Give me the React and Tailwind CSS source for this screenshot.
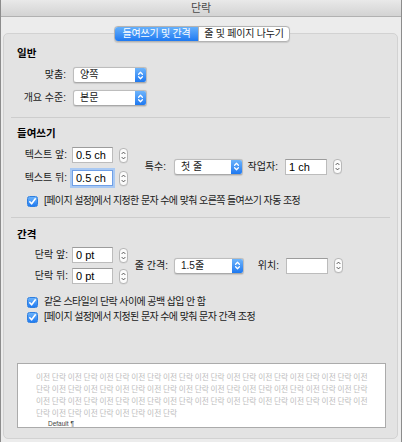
import React from "react";

const Chev = ({ color = "white", sw = 1.3 }) => (
  <svg width="7" height="11" viewBox="0 0 7 11" fill="none" stroke={color} strokeWidth={sw} strokeLinecap="round" strokeLinejoin="round">
    <path d="M1.6 4.2 L3.5 2.3 L5.4 4.2" />
    <path d="M1.6 6.8 L3.5 8.7 L5.4 6.8" />
  </svg>
);

const SmallChev = () => (
  <svg width="5" height="11" viewBox="0 0 5 11" fill="none" stroke="#505050" strokeWidth="1" strokeLinecap="round" strokeLinejoin="round">
    <path d="M1 3.6 L2.5 2.1 L4 3.6" />
    <path d="M1 7.4 L2.5 8.9 L4 7.4" />
  </svg>
);

function Popup({ value, className }) {
  return (
    <div className={"flex h-[16px] rounded-[3px] bg-white border border-[#bdbdbd] border-b-[#a9a9a9] shadow-[0_0.5px_1px_rgba(0,0,0,0.12)] overflow-hidden " + className}>
      <div className="flex-1 pl-[6px] text-[10px] leading-[14px] text-[#1a1a1a]">{value}</div>
      <div className="w-[11px] h-full bg-gradient-to-b from-[#6db4fb] to-[#1c78f0] flex items-center justify-center">
        <Chev />
      </div>
    </div>
  );
}

function Stepper() {
  return (
    <div className="w-[9px] h-[15px] rounded-[4px] border border-[#b8b8b8] bg-[#fbfbfb] flex items-center justify-center shadow-[0_0.5px_0.5px_rgba(0,0,0,0.08)]">
      <SmallChev />
    </div>
  );
}

function Input({ value = "", className = "", focused = false }) {
  return (
    <div
      className={
        "h-[16px] bg-white pl-[3px] text-[11px] leading-[14px] text-black " +
        (focused
          ? "border border-[#6f9fe6] shadow-[0_0_0_2px_#a9c9f3] "
          : "border border-[#bcbcbc] border-t-[#9c9c9c] ") +
        className
      }
    >
      {value}
    </div>
  );
}

function Check({ label }) {
  return (
    <div className="flex items-center h-[14px] pl-[10px]">
      <div className="w-[11px] h-[11px] rounded-[2.5px] bg-gradient-to-b from-[#6ab2fb] to-[#1e7bf1] border border-[#2f7fe0] flex items-center justify-center">
        <svg width="9" height="9" viewBox="0 0 9 9" fill="none" stroke="white" strokeWidth="1.6" strokeLinecap="round" strokeLinejoin="round">
          <path d="M1.8 4.8 L3.6 6.8 L7.3 1.8" />
        </svg>
      </div>
      <div className="ml-[6px] text-[10px] leading-[14px] text-[#1a1a1a] tracking-[-0.6px] whitespace-nowrap">{label}</div>
    </div>
  );
}

function Label({ children, className = "" }) {
  return (
    <div className={"text-right text-[10px] leading-[14px] text-[#1a1a1a] whitespace-nowrap " + className}>{children}</div>
  );
}

function Sep() {
  return <div className="h-px bg-[#cdcdcd] ml-[-6px] mr-[-3px]" />;
}

const l1 = "이전 단락 이전 단락 이전 단락 이전 단락 이전 단락 이전 단락 이전 단락 이전 단락 이전 단락 이전 단락 이전";
const l2 = "단락 이전 단락 이전 단락 이전 단락 이전 단락 이전 단락 이전 단락 이전 단락 이전 단락 이전 단락 이전 단락";
const l4 = "단락 이전 단락 이전 단락 이전 단락 이전 단락";

export default function App() {
  return (
    <div className="w-[402px] h-[442px] bg-[#ececec] border-l border-r border-[#8c8c8c] overflow-hidden font-['Liberation_Sans','Noto_Sans_CJK_KR',sans-serif]">
      {/* title bar */}
      <div className="h-[17px] bg-gradient-to-b from-[#e9e9e9] to-[#d3d3d3] border-b border-[#b1b1b1] flex items-center justify-center text-[11px] leading-[14px] text-[#4b4b4b]">
        단락
      </div>

      {/* tabs */}
      <div className="relative z-10 mt-[9px] flex justify-center">
        <div className="flex h-[16px] rounded-[4px] border border-[#b3b3b3] bg-white overflow-hidden shadow-[0_0.5px_1px_rgba(0,0,0,0.12)] ml-[2px]">
          <div className="w-[83px] bg-gradient-to-b from-[#65b0fb] to-[#1d79f1] text-white text-[10px] leading-[14px] flex items-center justify-center tracking-[-0.2px]">
            들여쓰기 및 간격
          </div>
          <div className="w-[91px] border-l border-[#b3b3b3] text-[#1a1a1a] text-[10px] leading-[14px] flex items-center justify-center tracking-[-0.2px]">
            줄 및 페이지 나누기
          </div>
        </div>
      </div>

      {/* group box */}
      <div className="mt-[-9px] ml-[2px] w-[395px] h-[406px] rounded-[5px] border border-[#d2d2d2] bg-[#e3e3e3] pl-[13px] pr-[10px]">
        <div className="pt-[12px] text-[10.5px] leading-[14px] font-bold text-black">일반</div>

        <div className="mt-[7px] flex items-center">
          <Label className="w-[49px]">맞춤:</Label>
          <Popup value="양쪽" className="ml-[7px] w-[74px]" />
        </div>
        <div className="mt-[7px] flex items-center">
          <Label className="w-[49px]">개요 수준:</Label>
          <Popup value="본문" className="ml-[7px] w-[74px]" />
        </div>

        <div className="mt-[11px]"><Sep /></div>

        <div className="mt-[8px] text-[10.5px] leading-[14px] font-bold text-black">들여쓰기</div>

        <div className="mt-[7px] flex items-center">
          <div className="flex flex-col gap-[7px]">
            <div className="flex items-center">
              <Label className="w-[50px]">텍스트 앞:</Label>
              <Input value="0.5 ch" className="ml-[5px] w-[41px]" />
              <div className="ml-[6px]"><Stepper /></div>
            </div>
            <div className="flex items-center">
              <Label className="w-[50px]">텍스트 뒤:</Label>
              <Input value="0.5 ch" focused className="ml-[5px] w-[41px]" />
              <div className="ml-[6px]"><Stepper /></div>
            </div>
          </div>
          <Label className="w-[38px]">특수:</Label>
          <Popup value="첫 줄" className="ml-[8px] w-[69px]" />
          <Label className="w-[35px]">작업자:</Label>
          <Input value="1 ch" className="ml-[7px] w-[42px]" />
          <div className="ml-[6px]"><Stepper /></div>
        </div>

        <div className="mt-[8px]">
          <Check label="[페이지 설정]에서 지정한 문자 수에 맞춰 오른쪽 들여쓰기 자동 조정" />
        </div>

        <div className="mt-[9px]"><Sep /></div>

        <div className="mt-[9px] text-[10.5px] leading-[14px] font-bold text-black">간격</div>

        <div className="mt-[6px] flex items-center">
          <div className="flex flex-col gap-[5px]">
            <div className="flex items-center">
              <Label className="w-[51px]">단락 앞:</Label>
              <Input value="0 pt" className="ml-[4px] w-[41px]" />
              <div className="ml-[6px]"><Stepper /></div>
            </div>
            <div className="flex items-center">
              <Label className="w-[51px]">단락 뒤:</Label>
              <Input value="0 pt" className="ml-[4px] w-[41px]" />
              <div className="ml-[6px]"><Stepper /></div>
            </div>
          </div>
          <Label className="w-[40px]">줄 간격:</Label>
          <Popup value="1.5줄" className="ml-[6px] w-[70px]" />
          <Label className="w-[35px]">위치:</Label>
          <Input value="" className="ml-[7px] w-[42px]" />
          <div className="ml-[6px]"><Stepper /></div>
        </div>

        <div className="mt-[11px] flex flex-col gap-[1px]">
          <Check label="같은 스타일의 단락 사이에 공백 삽입 안 함" />
          <Check label="[페이지 설정]에서 지정된 문자 수에 맞춰 문자 간격 조정" />
        </div>

        <div className="mt-[39px] w-[369px] h-[65px] bg-white border border-[#ababab] overflow-hidden pl-[18px] pt-[7px]">
          <div className="text-[7.7px] leading-[12px] text-[#bcbcbc] whitespace-nowrap font-['Noto_Sans_CJK_KR',sans-serif]">
            <div>{l1}</div>
            <div>{l2}</div>
            <div>{l1}</div>
            <div>{l4}</div>
          </div>
          <div className="mt-[1px] ml-[12px] text-[6.5px] leading-[8px] text-[#444]">Default ¶</div>
        </div>
      </div>
    </div>
  );
}
